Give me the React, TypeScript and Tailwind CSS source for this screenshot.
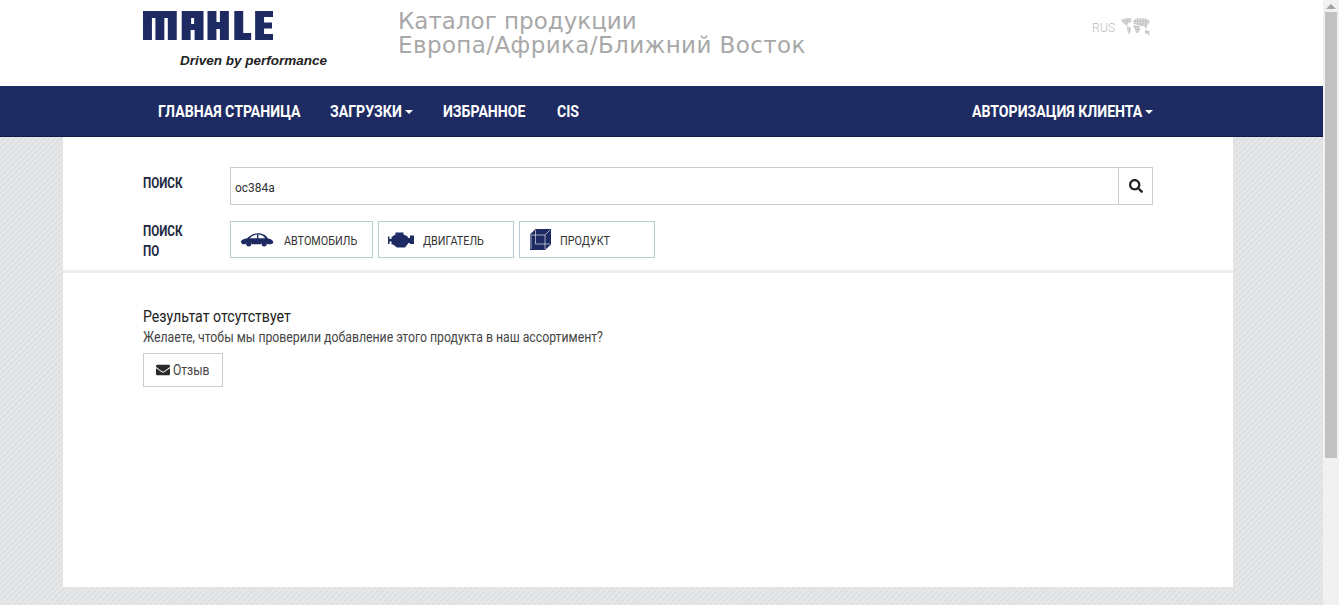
import type { ReactNode } from 'react';
import { FaEnvelope, FaSearch } from 'react-icons/fa';

// the original uses Roboto Condensed, so Roboto gets squeezed sideways
const squeeze = 'inline-block origin-left scale-x-[.83] whitespace-nowrap';

const navItems = [
  { label: 'ГЛАВНАЯ СТРАНИЦА', width: 'w-[142px]' },
  { label: 'ЗАГРУЗКИ', width: 'w-[73px]', caret: true },
  { label: 'ИЗБРАННОЕ', width: 'w-[84px]' },
  { label: 'CIS', width: 'w-[22px]' },
];

function Caret() {
  return <span className="ml-[2px] inline-block h-0 w-0 border-x-4 border-t-4 border-x-transparent border-t-white" />;
}

function MahleLogo() {
  return (
    <svg width="130" height="29" viewBox="0 0 131 29" fill="#1e2b63" className="block">
      <path d="M0 0H34V29H25V7H21.5V29H12.5V7H9V29H0Z" />
      <path fillRule="evenodd" d="M39 0H61V29H52V19H48V29H39ZM48.5 7V13H51.5V7Z" />
      <path d="M65 0H74V11H77.5V0H86.5V29H77.5V18H74V29H65Z" />
      <path d="M92 0H101V22H109V29H92Z" />
      <path d="M113 0H131V6H122V11.5H130V17.5H122V23H131V29H113Z" />
    </svg>
  );
}

function WorldIcon() {
  return (
    <svg width="29" height="18" viewBox="0 0 29 18" className="block">
      <defs>
        <pattern id="dots" width="1.6" height="1.6" patternUnits="userSpaceOnUse">
          <rect width="1.3" height="1.3" fill="#b4b4b4" />
        </pattern>
      </defs>
      <g fill="url(#dots)">
        <path d="M0 1.5L8 0L11 1L9.5 4L7 5.5L6 8L3.5 6L1 3.5Z" />
        <path d="M6 8L10 9.5L9.5 13L8 17L6.5 13Z" />
        <path d="M12 3L15 0.5L25 0.5L29 3.5L26.5 7L25.5 10.5L22.5 8L20 8.5L17 7L13 6Z" />
        <path d="M13 7L18 8L19.5 11L17 15L15 15L14 11L12 9Z" />
        <path d="M24 12L28.5 13L28.5 17L24 15.5Z" />
      </g>
    </svg>
  );
}

function CarIcon() {
  return (
    <svg width="34" height="15" viewBox="0 0 34 15" fill="#1e2b63" className="block">
      <path d="M0 10.5C0 8 2 7 6.5 6.2C9.5 3 13 1 18 1C23 1 26 3.5 28 6.5C31.5 7 33.5 8.5 33.5 11L31 12.3H27.5A4 4 0 0 0 20.5 12.3H11.5A4 4 0 0 0 4.5 12.3H1.5Z" />
      <path d="M9 6.2C11 4 13.5 2.6 16.5 2.4V6.2ZM18 2.4C21 2.6 23.5 4 25 6.2H18Z" fill="#fff" />
      <circle cx="8" cy="12" r="2.7" />
      <circle cx="24" cy="12" r="2.7" />
    </svg>
  );
}

function EngineIcon() {
  return (
    <svg width="26" height="16" viewBox="0 0 26 16" fill="#1e2b63" className="block">
      <path d="M0 4.5H1.5V7H3.5V5L7.5 2.5V0.5H15.5V2.5L19 4L20.5 6H22V3.5H26V12H22V11H20.5L17 15.5H9L5 12.5H3.5V9.5H1.5V12H0Z" />
    </svg>
  );
}

function BoxIcon() {
  return (
    <svg width="21" height="21" viewBox="0 0 21 21" className="block">
      <path d="M0 5.5L5.5 0H21V15.5L15 21H0Z" fill="#1e2b63" />
      <path d="M1 20V6H15V20M5.5 1V15H20M15 6L20 1" fill="none" stroke="#fff" strokeWidth="0.6" />
    </svg>
  );
}

function SearchByButton({ icon, label, className }: { icon: ReactNode; label: string; className: string }) {
  return (
    <button className={`flex h-[37px] items-center border border-[#b7ccd3] bg-white text-[13px] text-[#333] ${className}`}>
      {icon}
      <span className={`${squeeze} pt-[3px]`}>{label}</span>
    </button>
  );
}

export default function App() {
  return (
    <div className="flex h-[605px] overflow-hidden font-['Roboto',sans-serif] text-[#333]">
      <div className="flex flex-1 flex-col bg-[repeating-linear-gradient(135deg,#dfe0e2_0px,#dfe0e2_2px,#e6e7e8_2px,#e6e7e8_4px)]">
        <header className="flex h-[86px] bg-white pl-[143px]">
          <div className="w-[255px] pt-[11px]">
            <MahleLogo />
            <p className="mt-[13px] pl-[37px] font-['Liberation_Sans',sans-serif] text-[13.5px] leading-[15px] font-bold whitespace-nowrap text-[#222] italic">Driven by performance</p>
          </div>
          <div className="w-[694px] pt-[9px] font-['DejaVu_Sans',sans-serif] text-[23px] leading-[24px] text-[#a8a8a8]">
            <div>Каталог продукции</div>
            <div className="tracking-[0.4px]">Европа/Африка/Ближний Восток</div>
          </div>
          <div className="flex h-fit items-center gap-[5px] pt-[18px] text-xs font-light tracking-[0.3px] text-[#bdbdbd]">
            <span className="pt-[2px]">RUS</span>
            <WorldIcon />
          </div>
        </header>

        <nav className="flex h-[51px] items-center border-b border-[#131c45] bg-[#1e2b63] pr-[170px] pl-[143px] text-[17px] font-bold text-white">
          {navItems.map((item) => (
            <a key={item.label} className="flex items-center px-[15px] pt-[1px]">
              <span className={`${squeeze} ${item.width}`}>{item.label}</span>
              {item.caret && <Caret />}
            </a>
          ))}
          <a className="ml-auto flex items-center pt-[1px]">
            <span className={`${squeeze} w-[171px]`}>АВТОРИЗАЦИЯ КЛИЕНТА</span>
            <Caret />
          </a>
        </nav>

        <main className="ml-[63px] h-[450px] w-[1170px] bg-white">
          <section className="px-[80px] pt-[30px]">
            <div className="flex">
              <label className="w-[87px] pt-[6px] text-sm font-bold text-[#1f2a44]">
                <span className={squeeze}>ПОИСК</span>
              </label>
              <div className="flex h-[38px] flex-1 border border-[#ccc]">
                <span className="flex flex-1 items-center pt-[3px] pl-[4px] text-[13px] text-[#333]">
                  <span className="inline-block origin-left scale-x-[.92]">oc384a</span>
                </span>
                <span className="flex w-[34px] items-center justify-center border-l border-[#ccc]">
                  <FaSearch className="text-sm text-[#222]" />
                </span>
              </div>
            </div>
            <div className="mt-[16px] flex">
              <label className="h-[37px] w-[87px] text-sm leading-[20px] font-bold text-[#1f2a44]">
                <span className={squeeze}>
                  ПОИСК
                  <br />
                  ПО
                </span>
              </label>
              <div className="flex gap-[5px]">
                <SearchByButton icon={<CarIcon />} label="АВТОМОБИЛЬ" className="w-[143px] gap-[10px] pl-[10px]" />
                <SearchByButton icon={<EngineIcon />} label="ДВИГАТЕЛЬ" className="w-[136px] gap-[9px] pl-[9px]" />
                <SearchByButton icon={<BoxIcon />} label="ПРОДУКТ" className="w-[136px] gap-[9px] pl-[10px]" />
              </div>
            </div>
          </section>

          <div className="mt-[12px] h-[3px] bg-[#eee]" />

          <section className="px-[80px] pt-[34px]">
            <h3 className="text-base leading-[20px] text-[#222]">
              <span className="inline-block origin-left scale-x-[.886] whitespace-nowrap">Результат отсутствует</span>
            </h3>
            <p className="text-sm leading-[20px] text-[#444]">
              <span className="inline-block origin-left scale-x-[.876] whitespace-nowrap">Желаете, чтобы мы проверили добавление этого продукта в наш ассортимент?</span>
            </p>
            <button className="mt-[6px] flex h-[34px] w-[80px] items-center gap-[3px] border border-[#ccc] pl-[12px] text-sm text-[#444]">
              <FaEnvelope className="text-sm text-[#2b2b2b]" />
              <span className="inline-block origin-left scale-x-[.86]">Отзыв</span>
            </button>
          </section>
        </main>
      </div>

      <aside className="flex w-4 flex-col items-center bg-[#f1f1f1]">
        <span className="mt-[4px] h-0 w-0 border-x-[5px] border-b-[5px] border-x-transparent border-b-[#a3a3a3]" />
        <span className="mt-[3px] h-[446px] w-3 bg-[#c1c1c1]" />
      </aside>
    </div>
  );
}
